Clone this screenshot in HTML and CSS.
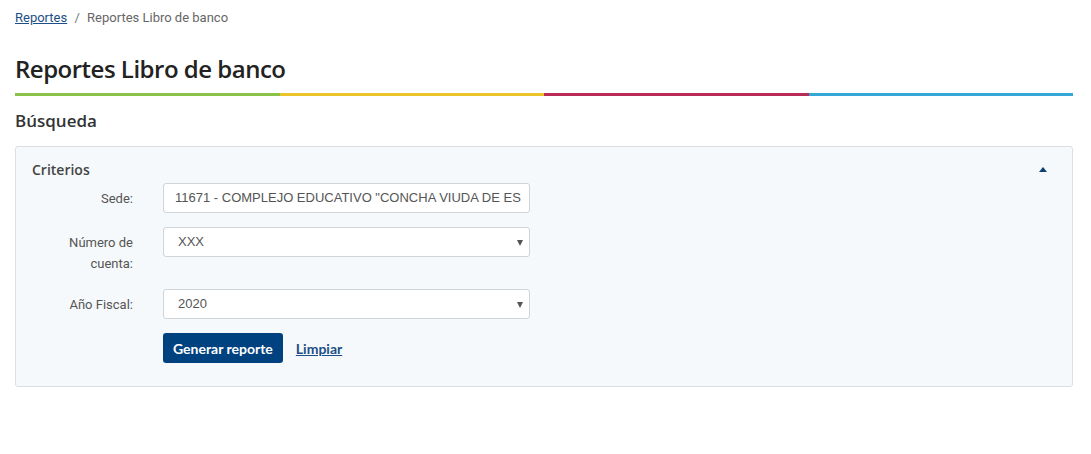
FILE: index.html
```html
<!DOCTYPE html>
<html lang="es">
<head>
    <meta charset="UTF-8">
    <title>Reportes Libro de banco</title>
    <link rel="stylesheet" href="styles.css">
</head>
<body>
    <div class="page">
        <!-- Breadcrumb -->
        <nav class="breadcrumb">
            <a href="#">Reportes</a>
            <span class="sep">/</span>
            <span class="current">Reportes Libro de banco</span>
        </nav>

        <h1 class="title">Reportes Libro de banco</h1>
        <div class="stripe">
            <span class="green"></span>
            <span class="yellow"></span>
            <span class="red"></span>
            <span class="blue"></span>
        </div>

        <h2 class="subtitle">Búsqueda</h2>

        <!-- Search panel -->
        <div class="panel">
            <div class="panel-head">
                <span class="panel-title">Criterios</span>
                <span class="toggle"></span>
            </div>
            <form class="form">
                <div class="row">
                    <label class="label">Sede:</label>
                    <div class="field">11671 - COMPLEJO EDUCATIVO "CONCHA VIUDA DE ES</div>
                </div>
                <div class="row">
                    <label class="label">Número de cuenta:</label>
                    <div class="field select">XXX</div>
                </div>
                <div class="row">
                    <label class="label">Año Fiscal:</label>
                    <div class="field select">2020</div>
                </div>
                <div class="row actions">
                    <span class="label"></span>
                    <button type="button" class="button">Generar reporte</button>
                    <a href="#" class="link">Limpiar</a>
                </div>
            </form>
        </div>
    </div>
</body>
</html>
```

FILE: styles.css
```css
body {
    margin: 0;
    padding: 0;
    background-color: #fff;
    font-family: Roboto, Arial, sans-serif;
    color: #333;
}
.page {
    padding: 9px 18px 0 15px;
}
.breadcrumb {
    font-size: 13px;
    color: #666;
    line-height: 18px;
}
.breadcrumb a {
    color: #1d4f86;
    text-decoration: underline;
}
.breadcrumb .sep {
    margin: 0 4px;
    color: #777;
}
.title {
    font-family: "Open Sans", sans-serif;
    font-weight: 600;
    font-size: 24px;
    color: #222;
    margin: 25px 0 0 0;
    line-height: 34px;
    letter-spacing: -0.5px;
}
.stripe {
    display: flex;
    height: 3px;
    margin-top: 7px;
}
.stripe span {
    flex: 1;
}
.stripe .green { background-color: #8bc34a; }
.stripe .yellow { background-color: #ecc42c; }
.stripe .red { background-color: #b82c57; }
.stripe .blue { background-color: #36a8d8; }
.subtitle {
    font-family: "Open Sans", sans-serif;
    font-weight: 600;
    font-size: 17px;
    color: #333;
    margin: 14px 0 0 0;
    line-height: 22px;
}
.panel {
    margin-top: 14px;
    background-color: #f5f9fb;
    border: 1px solid #dcdfe2;
    border-radius: 3px;
    padding: 13px 16px 23px 16px;
}
.panel-head {
    display: flex;
    justify-content: space-between;
    align-items: center;
    height: 18px;
}
.panel-title {
    font-family: "Open Sans", sans-serif;
    font-weight: 600;
    font-size: 14px;
    color: #444;
}
.toggle {
    width: 0;
    height: 0;
    border-left: 4px solid transparent;
    border-right: 4px solid transparent;
    border-bottom: 5px solid #0b3f77;
    margin-right: 9px;
}
.form {
    margin-top: 5px;
}
.row {
    display: flex;
    align-items: flex-start;
    margin-bottom: 14px;
}
.label {
    width: 101px;
    flex-shrink: 0;
    text-align: right;
    font-size: 13px;
    color: #555;
    line-height: 21px;
    padding-top: 5px;
    padding-bottom: 1px;
    margin-right: 30px;
}
.field {
    width: 353px;
    height: 28px;
    background-color: #fff;
    border: 1px solid #cfd4d8;
    border-radius: 3px;
    padding: 0 1px 0 11px;
    font-family: "Liberation Sans", Arial, sans-serif;
    font-size: 13px;
    color: #555;
    line-height: 28px;
    white-space: nowrap;
    overflow: hidden;
    position: relative;
}
.select {
    padding-left: 14px;
    width: 350px;
}
.select::after {
    content: "";
    position: absolute;
    right: 6px;
    top: 12px;
    border-left: 3px solid transparent;
    border-right: 3px solid transparent;
    border-top: 6px solid #555;
}
.actions {
    align-items: center;
    margin-bottom: 0;
}
.actions .label {
    padding-top: 0;
    padding-bottom: 0;
}
.button {
    background-color: #00427f;
    color: #fff;
    border: none;
    border-radius: 3px;
    height: 30px;
    padding: 0 10px;
    font-family: Lato, sans-serif;
    font-weight: bold;
    font-size: 14px;
    cursor: pointer;
}
.link {
    margin-left: 13px;
    font-family: Lato, sans-serif;
    font-weight: bold;
    font-size: 14px;
    color: #1d4f86;
    text-decoration: underline;
}
```
